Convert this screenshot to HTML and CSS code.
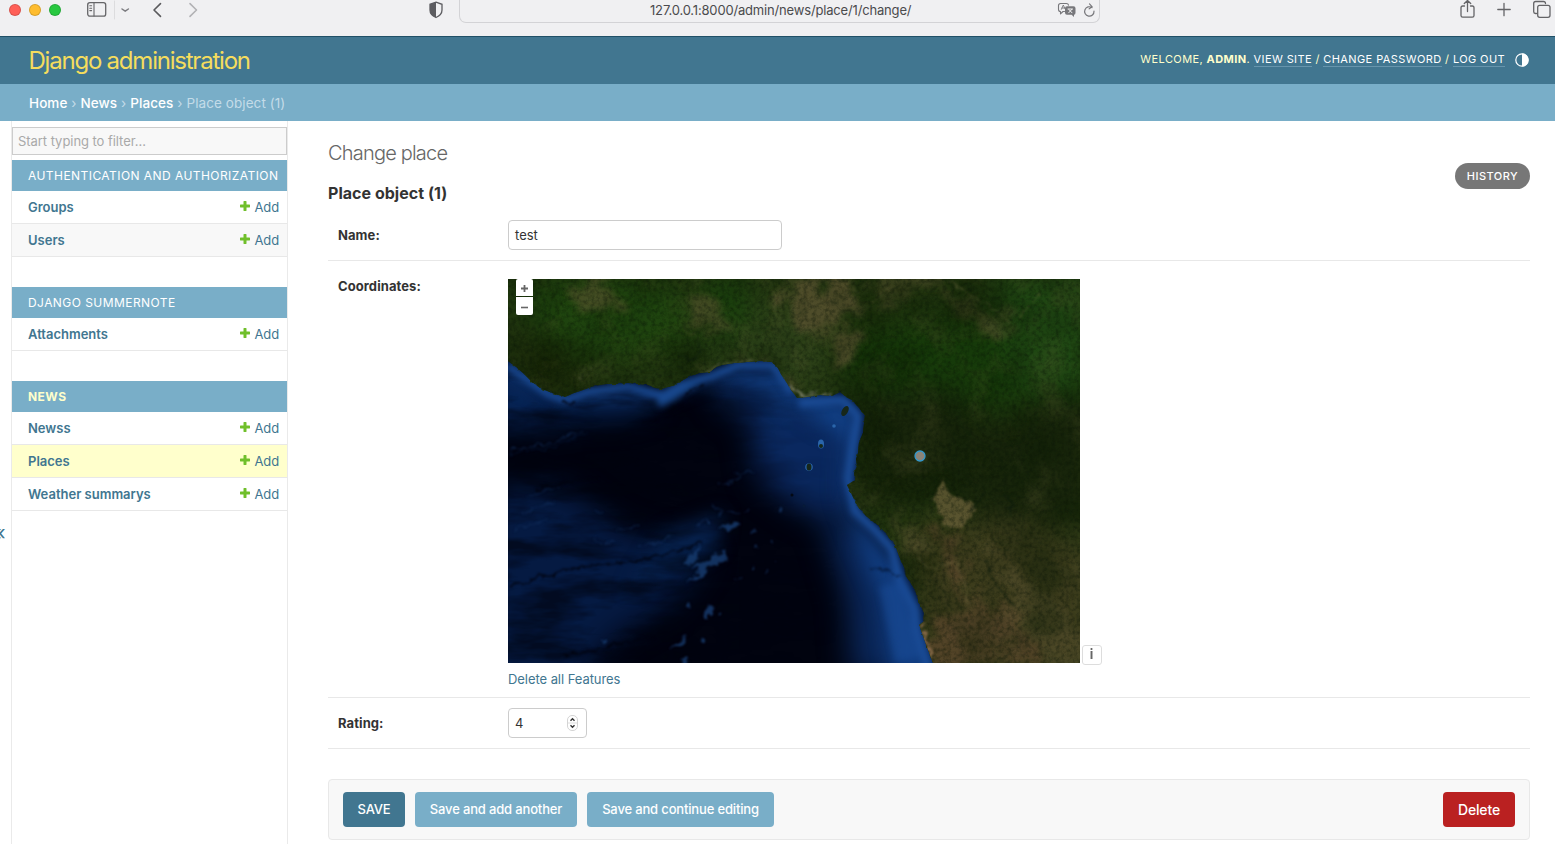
FILE: index.html
```html
<!DOCTYPE html>
<html lang="en">
<head>
<meta charset="utf-8">
<title>Change place | Django administration</title>
<link rel="stylesheet" href="styles.css">
</head>
<body>
<svg class="defs" width="0" height="0">
  <symbol id="plus" viewBox="0 0 10 10"><path d="M3.5 0.4Q3.5 0 3.9 0H6.1Q6.5 0 6.5 .4V3.5H9.6Q10 3.5 10 3.9V6.1Q10 6.5 9.6 6.5H6.5V9.6Q6.5 10 6.1 10H3.9Q3.5 10 3.5 9.6V6.5H.4Q0 6.5 0 6.1V3.9Q0 3.5 .4 3.5H3.5Z" fill="#70bf2b"/></symbol>
</svg>

<div class="chrome">
  <div class="lights"><i class="red"></i><i class="amber"></i><i class="green"></i></div>
  <svg class="chrome-left" width="120" height="20" fill="none" stroke="#656568" stroke-width="1.3" stroke-linecap="round" stroke-linejoin="round">
    <rect x="1.7" y="2.7" width="18" height="13.4" rx="2.2"/><path d="M8 3v13M3.8 5.8h1.8M3.8 8.2h1.8M3.8 10.6h1.8" stroke-width="1.1"/>
    <path d="M28.5 1v18" stroke="#dcdcde" stroke-width="1"/>
    <path d="M36 9l3.2 2.2L42.4 9" stroke="#7c7c80" stroke-width="1.5"/>
    <path d="M74.5 3.6l-6.5 6.4 6.5 6.4" stroke="#5a5a5d" stroke-width="1.6"/>
    <path d="M104 3.6l6.5 6.4-6.5 6.4" stroke="#b2b2b5" stroke-width="1.6"/>
  </svg>
  <svg class="shield" width="16" height="20"><path d="M8 2.2L14 4.3V10c0 4-2.500 6-6 7.500C4.500 16 2 14 2 10V4.300Z" fill="none" stroke="#5c5c60" stroke-width="1.300"/><path d="M8 2.200V17.500C4.500 16 2 14 2 10V4.300Z" fill="#5c5c60"/></svg>
  <div class="address">
    <span class="url">127.0.0.1:8000/admin/news/place/1/change/</span>
    <svg class="address-icons" width="40" height="20" fill="none" stroke="#77777b" stroke-width="1.1" stroke-linecap="round" stroke-linejoin="round">
      <path d="M7.500 11.500H6L3.500 13.800V11.500C2 11.500 1.500 10.700 1.500 9.500V5.600C1.500 4.200 2.200 3.500 3.600 3.500H9.400C10.600 3.500 11.300 4 11.500 5.200"/><path d="M4.400 9.300L6.300 5l1.600 3.600M5 8h2.500" stroke-width=".9"/>
      <path d="M10 6.300h6.500q2 0 2 2v4.500q0 2-1.500 2v2.200l-2.400-2.200H10q-2 0-2-2V8.300q0-2 2-2Z" fill="#77777b" stroke="none"/><path d="M11 9h4.500M11.700 12.800l3.200-3.500M12 9.600l3 3.200" stroke="#fff" stroke-width=".9"/>
      <path d="M35 7.600A4.700 4.700 0 1 0 37 11.200M32.500 3.900l2.700 2.900-3 2" stroke-width="1.2"/>
    </svg>
  </div>
  <svg class="chrome-right" width="97" height="20" fill="none" stroke="#646467" stroke-width="1.3" stroke-linecap="round" stroke-linejoin="round">
    <path d="M5.500 6H3.700Q2 6 2 7.700V15.500Q2 17.200 3.700 17.200H13.300Q15 17.200 15 15.500V7.700Q15 6 13.300 6H11.500M8.500 11.500V.8M5.300 3.500L8.500.5l3.200 3"/>
    <path d="M45 3.300v12.400M38.800 9.500h12.400"/>
    <path d="M77.500 13.500H76.500Q74.700 13.500 74.700 11.700V3.500Q74.700 1.500 76.700 1.500H84.500Q86.400 1.500 86.500 3.500"/><rect x="78.700" y="5.300" width="12.300" height="12" rx="2"/>
  </svg>
</div>

<header class="header">
  <div class="brand">Django administration</div>
  <div class="user-tools"><span>WELCOME, <b>ADMIN</b>. <a>VIEW SITE</a> / <a>CHANGE PASSWORD</a> / <a>LOG OUT</a></span>
    <svg class="theme" width="14" height="14"><circle cx="7" cy="7" r="6.200" fill="none" stroke="#fff" stroke-width="1.200"/><path d="M7 .5a6.500 6.500 0 0 1 0 13Z" fill="#fff"/></svg>
  </div>
</header>
<nav class="breadcrumbs"><a>Home</a> › <a>News</a> › <a>Places</a> › Place object (1)</nav>

<div class="body">
  <div class="toggle">«</div>
  <aside class="sidebar">
    <div class="filter">Start typing to filter...</div>
    <section class="app">
      <h2>AUTHENTICATION AND AUTHORIZATION</h2>
      <div class="row"><b>Groups</b><a class="add"><svg width="10" height="10"><use href="#plus"/></svg>Add</a></div>
      <div class="row alt"><b>Users</b><a class="add"><svg width="10" height="10"><use href="#plus"/></svg>Add</a></div>
    </section>
    <section class="app">
      <h2>DJANGO SUMMERNOTE</h2>
      <div class="row"><b>Attachments</b><a class="add"><svg width="10" height="10"><use href="#plus"/></svg>Add</a></div>
    </section>
    <section class="app">
      <h2 class="current">NEWS</h2>
      <div class="row"><b>Newss</b><a class="add"><svg width="10" height="10"><use href="#plus"/></svg>Add</a></div>
      <div class="row selected"><b>Places</b><a class="add"><svg width="10" height="10"><use href="#plus"/></svg>Add</a></div>
      <div class="row"><b>Weather summarys</b><a class="add"><svg width="10" height="10"><use href="#plus"/></svg>Add</a></div>
    </section>
  </aside>

  <main class="main">
    <div class="title-row"><h1>Change place</h1><a class="history">HISTORY</a></div>
    <h2 class="object">Place object (1)</h2>
    <div class="field name"><label>Name:</label><div class="input text">test</div></div>
    <div class="field coords">
      <label>Coordinates:</label>
      <div class="geo">
        <div class="map">
          <svg width="572" height="384" viewBox="0 0 572 384" color-interpolation-filters="sRGB">
            <defs>
              <path id="landshape" d="M0 82L8 88 15 94 23 102 32 109 44 114 57 118 66 114 75 111 86 107 99 105 110 105 120 104 130 105 139 106 147 109 154 110 163 107 172 103 182 97 192 94 202 93 208 88 214 86 226 84 239 83 252 82 264 83 270 89 274 97 279 104 283 111 287 116 289 119 300 118 312 116 324 117 332 113 338 118 344 121 350 128 357 136 356 145 355 154 351 163 350 174 348 180 349 187 346 194 347 201 339 206 344 216 350 228 358 237 369 246 379 255 387 266 391 277 396 288 397 296 402 303 407 311 411 323 416 334 415 343 411 346 415 357 419 368 425 384H590V-20H-20V82Z"/>
              <clipPath id="land"><use href="#landshape"/></clipPath>
              <linearGradient id="fade"><stop offset="0" stop-color="#fff"/><stop offset=".4" stop-color="#fff"/><stop offset="1" stop-color="#000"/></linearGradient>
              <mask id="seamask"><rect width="330" height="384" fill="url(#fade)"/></mask>
              <filter id="b3" x="-50%" y="-50%" width="200%" height="200%"><feGaussianBlur stdDeviation="3"/></filter>
              <filter id="b1" x="-50%" y="-50%" width="200%" height="200%"><feTurbulence type="fractalNoise" baseFrequency=".12" numOctaves="3" seed="5" result="n"/><feDisplacementMap in="SourceGraphic" in2="n" scale="10" xChannelSelector="R" yChannelSelector="G"/><feGaussianBlur stdDeviation=".8"/></filter>
              <filter id="soft" x="-50%" y="-50%" width="200%" height="200%"><feGaussianBlur stdDeviation=".6"/></filter>
              <filter id="b8" x="-50%" y="-50%" width="200%" height="200%"><feGaussianBlur stdDeviation="9"/></filter>
              <filter id="b16" x="-50%" y="-50%" width="200%" height="200%"><feGaussianBlur stdDeviation="15"/></filter>
              <filter id="rough" x="-50%" y="-50%" width="200%" height="200%"><feTurbulence type="fractalNoise" baseFrequency=".05" numOctaves="5" seed="8" result="n"/><feDisplacementMap in="SourceGraphic" in2="n" scale="50" xChannelSelector="R" yChannelSelector="G"/><feGaussianBlur stdDeviation="3"/></filter>
              <filter id="grain" x="0" y="0" width="100%" height="100%"><feTurbulence type="fractalNoise" baseFrequency=".23" numOctaves="3" seed="4"/><feColorMatrix values="0 0 0 0 .03  0 0 0 0 .07  0 0 0 0 .02  1.5 0 0 0 -.6"/><feGaussianBlur stdDeviation=".4"/></filter>
              <filter id="dark" x="0" y="0" width="100%" height="100%"><feTurbulence type="fractalNoise" baseFrequency=".018" numOctaves="6" seed="14"/><feColorMatrix values="0 0 0 0 .05  0 0 0 0 .11  0 0 0 0 .02  0 2.500 0 0 -1.100"/></filter>
              <filter id="light" x="0" y="0" width="100%" height="100%"><feTurbulence type="fractalNoise" baseFrequency=".025" numOctaves="7" seed="21"/><feColorMatrix values="0 0 0 0 .40  0 0 0 0 .38  0 0 0 0 .22  0 3 0 0 -1.500"/></filter>
              <filter id="sea" x="0" y="0" width="100%" height="100%"><feTurbulence type="fractalNoise" baseFrequency=".014 .05" numOctaves="4" seed="7"/><feColorMatrix values="0 0 0 0 0  0 0 0 0 .01  0 0 0 0 .05  0 2.800 0 0 -1.100"/></filter>
              <filter id="coastrough" x="-5%" y="-5%" width="110%" height="110%"><feTurbulence type="fractalNoise" baseFrequency=".2" numOctaves="2" seed="3" result="n"/><feDisplacementMap in="SourceGraphic" in2="n" scale="3" xChannelSelector="R" yChannelSelector="G"/></filter>
            </defs>
            <rect width="572" height="384" fill="#01030f"/>
            <g filter="url(#b16)">
              <path d="M-20 205L60 210 110 250 200 275 165 325 110 355 60 410H-30Z" fill="#051a42"/>
              <path d="M-20 80L60 120 150 115 130 135 60 140-20 150Z" fill="#07275c"/>
              <path d="M235 95L350 130 350 225 300 235 250 200Z" fill="#0a285f"/>
              <path d="M200 95L275 85 300 130 285 150 220 130Z" fill="#0a2a60"/>
              <path d="M310 225L380 270 440 400 345 400 340 320Z" fill="#0a285c"/>
            </g>
            <g filter="url(#b8)">
              <path d="M-10 75L50 117 100 105 150 110 215 87 270 88 288 118 345 122 352 150 338 205 350 240 397 300 430 400 385 400 375 320 350 265 332 215 335 160 285 130 240 100 205 98 145 122 60 122-10 95Z" fill="#113e82"/>
              <path d="M155 255l60-22-5 35-30 17-60 28Z" fill="#06204a"/>
            </g>
            <g mask="url(#seamask)"><rect y="80" width="330" height="304" filter="url(#sea)" opacity=".6"/></g>
            <g filter="url(#b3)" fill="none" stroke="#1a4b95">
              <path d="M0 87L20 101 40 115 57 121 80 113 120 107 154 117 172 106 205 97 230 86 265 86 284 114" stroke-width="7"/>
              <path d="M150 125L163 118 187 103" stroke="#174689" stroke-width="8"/>
              <path d="M291 124L335 121 350 137 345 165 340 200 347 232 368 252 384 270 391 300 407 330 408 350 420 390" stroke-width="9"/>
              <path d="M384 305L400 380" stroke-width="26" opacity=".55"/>
            </g>
            <g filter="url(#b1)" transform="translate(1 1)">
              <g fill="none" stroke="#01030e" opacity=".8">
                <path d="M134 143Q158 137 169 125T195 103" stroke-width="1.500"/><path d="M52 123L68 122M0 306L60 289 135 280 194 263M53 376l50-10 42-9M28 210q35-12 62-10" stroke-width="2"/>
                <path d="M0 173l35-4 45-17M361 288l10 2 21 6" stroke="#051736" stroke-width="1.200"/>
              </g>
              <g fill="none" stroke="#153464" stroke-width="1.200" opacity=".65">
                <path d="M0 170l35-5 38-14M85 260q18 4 20 4M128 266q20 0 35-12M210 203l12-2 11-4M223 194h14l7-4M204 227l7 3-1 8M218 232l15 1 5-2M186 245l14-6M225 299l9-1"/>
                <path d="M17 217l15-5 18-5M12 235l35-14M5 250l32-10M88 230l4 4M108 250l22-4"/>
              </g>
              <g fill="#1a4279" opacity=".75">
                <path d="M211 249q10-8 21-6-8 7-21 6M182 288l22-12 14-5-2 10-15 6-6 8-20 9 15-12 2-4ZM198 324l6 2-6 14-2-3ZM160 367l20-13-8 11ZM192 265l-5 18-14 2Z"/>
                <circle cx="245" cy="252" r="1.800"/><circle cx="248" cy="269" r="1.500"/><circle cx="264" cy="263" r="1.500"/><circle cx="243" cy="289" r="1.200"/><circle cx="267" cy="280" r="1"/><circle cx="258" cy="291" r="1"/><circle cx="271" cy="232" r="2"/><circle cx="95" cy="361" r="2"/><circle cx="194" cy="361" r="3"/><circle cx="176" cy="382" r="3.500"/><circle cx="213" cy="335" r="1.500"/><circle cx="199" cy="243" r="2"/><circle cx="179" cy="325" r="2"/>
              </g>
            </g>
            <g filter="url(#soft)">
              <g fill="#2a65aa"><ellipse cx="313" cy="165" rx="3" ry="4.500"/><circle cx="326" cy="147" r="1.800"/><circle cx="301" cy="188" r="3.800"/></g>
              <g fill="#172719"><ellipse cx="337" cy="132" rx="3" ry="5.500" transform="rotate(30 337 132)"/><ellipse cx="301" cy="188" rx="2.500" ry="3.500"/><circle cx="313" cy="167" r="2"/><circle cx="284" cy="216" r="1.500" fill="#030914"/><circle cx="296" cy="227" r="1.500" fill="#071a38"/></g>
            </g>
            <use href="#landshape" fill="#20330f" filter="url(#coastrough)"/>
            <g clip-path="url(#land)">
              <g filter="url(#b16)">
                <path d="M0 0H160L200 65 60 85 30 50Z" fill="#1f450f"/><path d="M170 20H320V110H220Z" fill="#2d4119"/>
                <path d="M190 0L240 0 240 60 200 60Z" fill="#183f0c"/>
                <path d="M330 55L430 40 590 40V130H350Z" fill="#163a0a"/><path d="M340 112H450L460 130 500 145 520 120H590V245H480L430 215 355 230Z" fill="#18250b"/>
                <path d="M480 0H590V110H510Z" fill="#1f4713"/><path d="M400 250L510 240 590 270V400H415Z" fill="#3b3b1c"/>
                <path d="M0 60L65 65 70 118H20Z" fill="#1a2809"/>
              </g>
              <g filter="url(#rough)" fill="#5c5332" opacity=".75">
                <path d="M275 0H345L350 28 325 42 300 65 340 50 360 57 335 91 322 90 332 65 285 42Z"/><path d="M60 8L100-5 112 22 75 33ZM180 15l26-5 10 40-22 12ZM420 5l35 10 45 40-32-5Z" opacity=".7"/>
                <path d="M365 -5h65l-20 20-40 15ZM465 30l35 5 15 25-25-5Z" opacity=".6"/>
                <path d="M425 255L450 258 460 325 500 320 530 364 520 390H420L430 340 455 320Z" fill="#5b472c"/>
                <path d="M385 240l35 15-10 25-20-25ZM475 250l25 40 60 40 20 60h-40l-30-60Z" opacity=".6"/>
                <path d="M220 83l40-4 12 10 20 24-15-5-20-20-35 2Z" opacity=".7"/>
              </g>
              <rect width="572" height="384" filter="url(#dark)" opacity=".5"/>
              <rect width="572" height="384" filter="url(#light)" opacity=".22"/>
              <g filter="url(#b1)" transform="translate(1 1)"><path d="M433 200L438 205 441 214 451 219 464 223 465 236 457 239 454 248 440 247 433 241 428 228 426 215Z" fill="#6b6039" opacity=".75"/></g>
              <rect width="572" height="384" filter="url(#grain)" opacity=".6"/>
              <g filter="url(#b1)" fill="none" transform="translate(1 1)">
                <path d="M264 10l3 10-2 8 4 10M174 47l15 14M342 8l8 5M364 25l8-10 10-8M520 27l-10 10 22-22M438 0l24 15 15 8 25 20" stroke="#777044" stroke-width="1" opacity=".45"/>
                <path d="M188 60l3 9-2 12-20-6M498 215l5 9-2 10M478 280q6 27 26 45M462 230l14-20" stroke="#0b190b" stroke-width="1.500" opacity=".7"/>
                <path d="M408 260q-1 40 40 20l12 44" stroke="#8a7d50" stroke-width="2" opacity=".25"/>
                <path d="M282 105l4 7 12 5 24-3M283 109l8 5 17-2" stroke="#a09d8a" stroke-width="2" stroke-dasharray="2 1" opacity=".75"/>
                <path d="M412 346l5-2M413 350l9 27" stroke="#a17b59" stroke-width="2.500" opacity=".8"/>
                <path d="M192 94l8-3 12-7 35-3" stroke="#8f8969" stroke-width="2" stroke-dasharray="2 2" opacity=".6"/>
                <path d="M65 107l10-10 15-2M75 84l-4 20M85 87l-12 12" stroke="#969071" stroke-dasharray="1 4" opacity=".6"/>
              </g>
            </g>
            <circle cx="412" cy="177" r="5" fill="#8a8378" stroke="#3399cc" stroke-width="1.300"/>
          </svg>
          <div class="zoom"><span><svg width="9" height="9"><path d="M4.500 1v7M1 4.500h7" stroke="#666" stroke-width="1.800"/></svg></span><span><svg width="9" height="9"><path d="M1 4.500h7" stroke="#666" stroke-width="1.600"/></svg></span></div>
          <div class="info">i</div>
        </div>
        <a class="delete-features">Delete all Features</a>
      </div>
    </div>
    <div class="field rating"><label>Rating:</label><div class="input number"><span>4</span><svg width="11" height="16" fill="none"><rect x=".5" y=".5" width="10" height="15" rx="4.500" fill="#fff" stroke="#d4d4d4"/><path d="M1 8h9" stroke="#ddd"/><path d="M3.500 5.800l2-2 2 2M3.500 10.200l2 2 2-2" stroke="#333" stroke-width="1.400"/></svg></div></div>
    <div class="submit"><button class="save">SAVE</button><button>Save and add another</button><button>Save and continue editing</button><button class="delete">Delete</button></div>
  </main>
</div>
</body>
</html>
```
FILE: styles.css
```css
* { box-sizing: border-box; }
html, body { height: 100%; }
body { margin: 0; overflow: hidden; background: #fff; color: #333; font: 13px/18px Inter, "Liberation Sans", sans-serif; }
h1, h2 { margin: 0; font-weight: 400; }
.defs { position: absolute; }
.chrome { display: flex; height: 37px; background: #f0f0f2; border-bottom: 1px solid #205067; }
.chrome > * { flex-shrink: 0; }
.lights { display: flex; gap: 8px; width: 86px; padding: 4px 0 0 9px; }
.lights i { width: 12px; height: 12px; border-radius: 50%; border: .5px solid rgba(0,0,0,.15); }
.red { background: #ff5f57; } .amber { background: #febc2e; } .green { background: #28c840; }
.chrome-left { margin-right: 222px; }
.address { display: flex; justify-content: flex-end; align-items: flex-start; width: 641px; height: 23px; margin-left: 15px; border: 1px solid #d3d3d6; border-top: 0; border-radius: 0 0 7px 7px; }
.url { width: 263px; margin-right: 144px; line-height: 21px; color: #4b4b4d; white-space: nowrap; letter-spacing: -.17px; }
.address-icons { margin-right: 2px; }
.chrome-right { margin-left: 359px; }
.header { display: flex; justify-content: space-between; align-items: center; height: 47px; padding: 0 26px 0 28.500px; background: #417690; color: #ffc; }
.brand { color: #f5dd5d; font-size: 24px; line-height: 30px; letter-spacing: -1.22px; }
.user-tools { display: flex; align-items: center; gap: 10px; font-size: 11px; line-height: 14px; letter-spacing: .4px; margin-top: -3px; white-space: nowrap; }
.user-tools a { color: #fff; border-bottom: 1px solid #6795ad; }
.theme { margin-top: 2px; }
.breadcrumbs { height: 37px; padding: 10px 29px; background: #79aec8; color: #c4dce8; font-size: 13.5px; letter-spacing: .08px; white-space: nowrap; }
.breadcrumbs a { color: #fff; font-weight: 500; }
.body { display: flex; height: 723px; }
.toggle { width: 11px; padding: 403px 0 0; margin-left: -6px; margin-right: 6px; color: #417690; font-size: 20px; line-height: 18px; }
.sidebar { width: 277px; border: solid #eaeaea; border-width: 0 1px; padding-top: 6px; }
.filter { height: 28px; margin-bottom: 5px; padding: 5px; border: 1px solid #ccc; background: #f8f8f8; color: #a9a9a9; line-height: 17px; letter-spacing: -.05px; }
.app { margin-bottom: 30px; }
.app h2 { height: 31px; padding: 0 16px; line-height: 31px; background: #79aec8; color: #fff; font-size: 12px; letter-spacing: .44px; white-space: nowrap; }
.app h2.current { color: #ffc; font-weight: 700; }
.row { display: flex; justify-content: space-between; height: 33px; padding: 0 8px 0 16px; border-bottom: 1px solid #e8e8e8; line-height: 33px; color: #417690; }
.row b { font-weight: 600; }
.row.alt { background: #f8f8f8; } .row.selected { background: #ffc; }
.add { display: flex; align-items: center; gap: 4px; letter-spacing: -.1px; } .add svg { margin-top: -2px; }
.main { flex: 1; padding: 20px 25px 0 40px; }
.title-row { display: flex; justify-content: space-between; height: 42px; }
h1 { color: #666; font-size: 20px; line-height: 25px; font-weight: 300; letter-spacing: -.8px; }
.history { width: 75px; height: 26px; margin-top: 22px; border-radius: 13px; background: #777; color: #fff; text-align: center; font-size: 11px; line-height: 26px; letter-spacing: .5px; font-weight: 500; }
.object { height: 27px; line-height: 21px; font-size: 16px; font-weight: 700; letter-spacing: .03px; }
.field { display: flex; padding: 10px; border-bottom: 1px solid #e8e8e8; }
.field label { width: 170px; font-weight: 700; line-height: 31px; letter-spacing: .08px; }
.field.name { height: 51px; } .field.coords { height: 437px; padding-top: 18px; } .field.rating { height: 51px; }
.field.coords label { line-height: 15px; }
.input { height: 30px; padding: 0 6px; border: 1px solid #ccc; border-radius: 4px; line-height: 29px; }
.text { width: 274px; }
.number { display: flex; justify-content: space-between; align-items: center; width: 79px; padding-right: 8px; }
.map { position: relative; width: 572px; height: 384px; margin-bottom: 7px; }
.map > svg { display: block; }
.zoom { position: absolute; left: 8px; top: 0; display: grid; gap: 1px; }
.zoom span { display: grid; place-items: center; width: 17px; height: 17px; background: #fff; border-radius: 2px 2px 0 0; }
.zoom span:first-child svg { margin-top: 2px; }
.zoom span + span { height: 18px; border-radius: 0 0 2px 2px; }
.zoom span + span svg { margin-top: 2px; }
.info { position: absolute; left: 574px; top: 366px; width: 20px; height: 20px; border: 1px solid #ddd; border-radius: 3px; text-align: center; line-height: 17px; padding-right: 1px; font-weight: 700; color: #666; background: #fff; }
.delete-features { color: #417690; letter-spacing: -.06px; }
.submit { display: flex; gap: 10px; height: 61px; margin-top: 30px; padding: 12px 14px; border: 1px solid #e8e8e8; border-radius: 4px; background: #f8f8f8; }
button { height: 35px; padding: 0; width: 162px; border: 0; border-radius: 4px; background: #79aec8; color: #fff; font: 500 13px/35px Inter, sans-serif; letter-spacing: -.16px; white-space: nowrap; }
button:nth-child(3) { width: 187px; }
button.save { width: 62px; background: #417690; }
button.delete { width: 72px; margin-left: auto; background: #ba2121; font-size: 14px; }
```
